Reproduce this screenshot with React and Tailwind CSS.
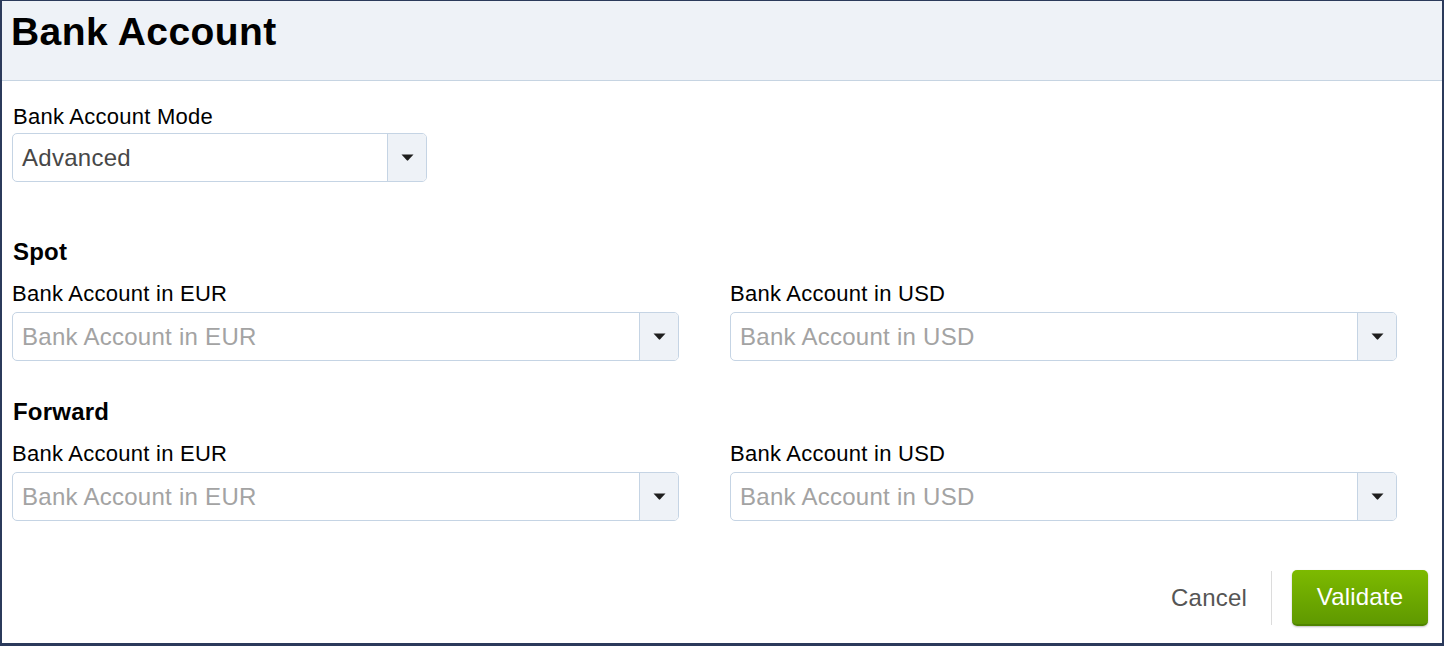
import React from "react";

const font = { fontFamily: '"Liberation Sans", Arial, Helvetica, sans-serif' };

function Caret() {
  return (
    <svg width="13" height="7" viewBox="0 0 13 7" className="block">
      <path d="M0.5 0.5 H12.5 L7.2 6.3 Q6.5 7 5.8 6.3 Z" fill="#1e1e1e" />
    </svg>
  );
}

function Select({ value, placeholder, className = "" }) {
  return (
    <div
      className={`flex h-[49px] rounded-[5px] border border-[#c5d4e4] bg-white overflow-hidden ${className}`}
    >
      <div className="flex flex-1 items-center pl-[9px]">
        {value ? (
          <span className="text-[24px] leading-[28px] tracking-[0.27px] text-[#474747]">{value}</span>
        ) : (
          <span className="text-[24px] leading-[28px] tracking-[0.27px] text-[#a3a3a3]">{placeholder}</span>
        )}
      </div>
      <div className="flex w-[39px] items-center justify-center border-l border-[#c5d4e4] bg-[#eef2f7]">
        <Caret />
      </div>
    </div>
  );
}

function Field({ label, placeholder }) {
  return (
    <div className="flex flex-col">
      <div className="text-[22px] leading-[24px] tracking-[0.26px] text-black">{label}</div>
      <Select placeholder={placeholder} className="mt-[6px]" />
    </div>
  );
}

function Section({ title, className = "" }) {
  return (
    <div className={className}>
      <div className="text-[24px] leading-[28px] font-bold tracking-[0.2px] text-black pl-[1px]">{title}</div>
      <div className="mt-[16px] grid grid-cols-[667px_667px] gap-x-[51px]">
        <Field label="Bank Account in EUR" placeholder="Bank Account in EUR" />
        <Field label="Bank Account in USD" placeholder="Bank Account in USD" />
      </div>
    </div>
  );
}

export default function App() {
  return (
    <div
      style={font}
      className="w-[1444px] h-[646px] bg-white border-[#2b3a5b] border-l-2 border-r-2 border-t border-b-[3px] flex flex-col overflow-hidden"
    >
      <div className="h-[80px] shrink-0 bg-[#eef2f7] border-b border-[#c6d4e2] pl-[9px] pt-[9px]">
        <h1 className="text-[39px] leading-[44px] font-bold tracking-[0.4px] text-black">Bank Account</h1>
      </div>
      <div className="flex flex-1 flex-col pl-[10px]">
        <div className="mt-[24px]">
          <div className="text-[22px] leading-[24px] tracking-[0.26px] text-black pl-[1px]">Bank Account Mode</div>
          <Select value="Advanced" className="mt-[4px] w-[415px]" />
        </div>
        <Section title="Spot" className="mt-[56px]" />
        <Section title="Forward" className="mt-[37px]" />
        <div className="mt-auto mb-[17px] flex items-center justify-end pr-[14px]">
          <span className="text-[24px] leading-[28px] tracking-[0.2px] text-[#555555]">Cancel</span>
          <div className="ml-[24px] mr-[20px] h-[54px] w-px bg-[#dcdcdc]" />
          <button className="h-[56px] w-[136px] rounded-[5px] border-b-2 border-[#4f8400] bg-gradient-to-b from-[#7dba00] to-[#5f9900] text-[24px] leading-[28px] tracking-[0.2px] text-white shadow-[0_1px_2px_rgba(0,0,0,0.25)]">
            Validate
          </button>
        </div>
      </div>
    </div>
  );
}
